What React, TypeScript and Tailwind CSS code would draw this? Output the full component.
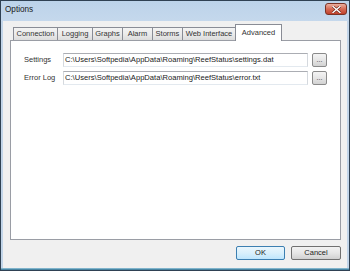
const font = "font-['Liberation_Sans',Arial,sans-serif]";

const tabs = [
  { label: "Connection", w: "w-[45px]" },
  { label: "Logging", w: "w-[36px]" },
  { label: "Graphs", w: "w-[31px]" },
  { label: "Alarm", w: "w-[31px]" },
  { label: "Storms", w: "w-[31px]" },
  { label: "Web Interface", w: "w-[54px]" },
];

const PathRow = ({ label, value }: { label: string; value: string }) => (
  <div className="flex items-center h-[14px]">
    <span className="w-[39px] text-[7.5px] text-[#333]">{label}</span>
    <div className="w-[245px] h-[14px] flex items-center bg-white border border-[#abadb3] border-l-[#d5d9de] border-r-[#d5d9de] border-b-[#e3e9ef] pl-[1px] text-[7.6px] text-[#222] whitespace-nowrap overflow-hidden">
      {value}
    </div>
    <button className="ml-[4px] w-[15px] h-[14px] rounded-[2px] border border-[#8a8a8a] bg-gradient-to-b from-[#f4f4f4] via-[#e6e6e6] to-[#d2d2d2] flex items-center justify-center text-[7px] leading-none text-[#333] pb-[2px]">
      ...
    </button>
  </div>
);

export default function App() {
  return (
    <div className={`${font} w-[350px] h-[271px] bg-[#c2d5e9] border border-[#2f4153] flex flex-col`}>
      {/* title bar */}
      <div className="h-[20px] shrink-0 flex items-start justify-between bg-gradient-to-b from-[#bcd3ea] to-[#c5d8ec]">
        <span className="pl-[4px] pt-[5px] text-[8.2px] leading-none text-[#1b1b1b]">Options</span>
        <div className="mr-[2px] mt-[2px] w-[22px] h-[12px] rounded-[3px] border border-[#7a3326] bg-gradient-to-b from-[#eab0a0] via-[#d66a55] to-[#c0402a] flex items-center justify-center">
          <svg width="9" height="7" viewBox="0 0 9 7">
            <path d="M1 0.5 L8 6.5 M8 0.5 L1 6.5" stroke="#6a2418" strokeWidth="2.6" strokeLinecap="square" />
            <path d="M1 0.5 L8 6.5 M8 0.5 L1 6.5" stroke="#ffffff" strokeWidth="1.4" strokeLinecap="square" />
          </svg>
        </div>
      </div>

      {/* client area */}
      <div className="mx-[2px] bg-[#f0f0f0] h-[247px] flex flex-col pt-[3px] pb-[8px]">
        <div className="flex items-end h-[16px] ml-[10px]">
          {tabs.map((t) => (
            <div
              key={t.label}
              className={`${t.w} -ml-px first:ml-0 h-[13px] border border-b-0 border-[#898c95] bg-gradient-to-b from-[#f3f3f3] via-[#ebebeb] to-[#dcdcdc] flex items-center justify-center text-[7.5px] text-[#333] whitespace-nowrap`}
            >
              {t.label}
            </div>
          ))}
          <div className="relative z-10 -ml-px w-[47px] h-[17px] -mb-px border border-b-0 border-[#898c95] bg-white flex items-start justify-center pt-[2px] text-[7.5px] text-[#333]">
            Advanced
          </div>
        </div>

        <div className="ml-[7px] mr-[6px] h-[200px] border border-[#9a9da5] bg-white pt-[12px] pl-[13px] flex flex-col gap-[4px]">
          <PathRow label="Settings" value="C:\Users\Softpedia\AppData\Roaming\ReefStatus\settings.dat" />
          <PathRow label="Error Log" value="C:\Users\Softpedia\AppData\Roaming\ReefStatus\error.txt" />
        </div>

        <div className="flex justify-end gap-[6px] mt-[6px] mr-[6px]">
          <button className="w-[49px] h-[14px] rounded-[2px] border border-[#3c7fb1] bg-gradient-to-b from-[#eaf6fd] via-[#d9f0fc] to-[#bee6fd] text-[7.5px] text-[#222] leading-none">
            OK
          </button>
          <button className="w-[50px] h-[14px] rounded-[2px] border border-[#707070] bg-gradient-to-b from-[#f2f2f2] via-[#e6e6e6] to-[#d0d0d0] text-[7.5px] text-[#222] leading-none">
            Cancel
          </button>
        </div>
      </div>
      <div className="flex-1 bg-gradient-to-b from-[#9ccbe0] to-[#2a6f8f]" />
    </div>
  );
}
